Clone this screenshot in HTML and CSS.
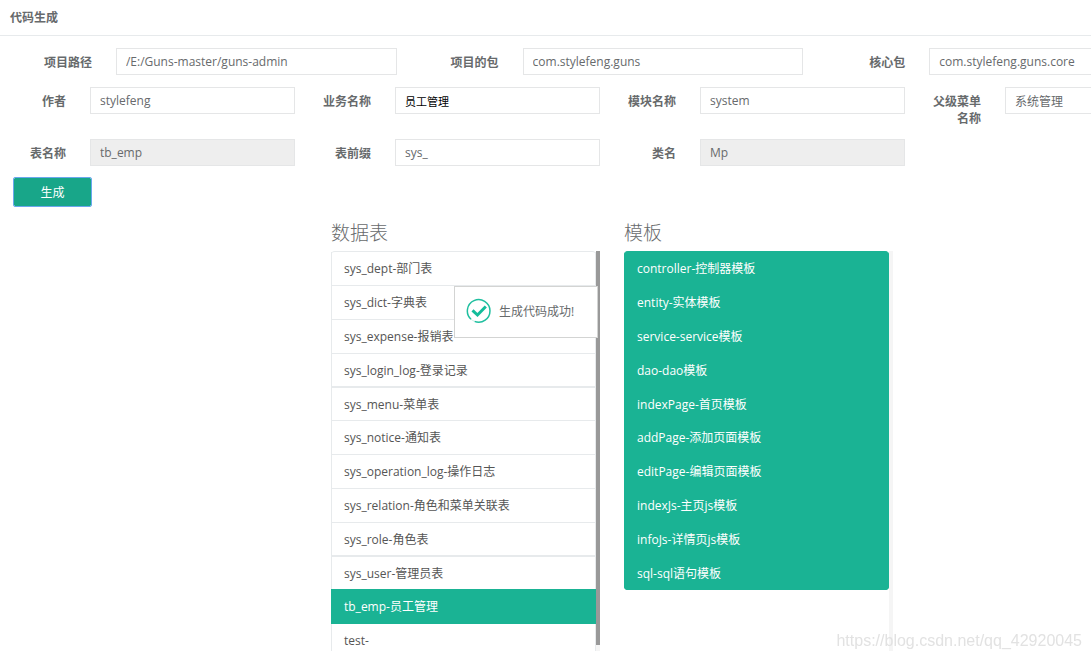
FILE: index.html
```html
<!DOCTYPE html>
<html lang="zh-CN">
<head>
<meta charset="utf-8">
<title>代码生成</title>
<link rel="stylesheet" href="styles.css">
</head>
<body>
<div class="page">
  <header class="page-title"><h1>代码生成</h1></header>
  <form class="code-form">
    <div class="row row-three">
      <div class="field"><label for="path">项目路径</label><input id="path" type="text" value="/E:/Guns-master/guns-admin"></div>
      <div class="field"><label for="pkg">项目的包</label><input id="pkg" type="text" value="com.stylefeng.guns"></div>
      <div class="field"><label for="core">核心包</label><input id="core" type="text" value="com.stylefeng.guns.core"></div>
    </div>
    <div class="row row-four">
      <div class="field"><label for="author">作者</label><input id="author" type="text" value="stylefeng"></div>
      <div class="field"><label for="biz">业务名称</label><input id="biz" class="autofilled" type="text" value="员工管理"></div>
      <div class="field"><label for="module">模块名称</label><input id="module" type="text" value="system"></div>
      <div class="field"><label for="parent">父级菜单名称</label><input id="parent" type="text" value="系统管理"></div>
    </div>
    <div class="row row-four">
      <div class="field"><label for="table">表名称</label><input id="table" type="text" value="tb_emp" disabled></div>
      <div class="field"><label for="prefix">表前缀</label><input id="prefix" type="text" value="sys_"></div>
      <div class="field"><label for="cls">类名</label><input id="cls" type="text" value="Mp" disabled></div>
    </div>
    <button class="generate" type="button">生成</button>
  </form>
  <main class="panels">
    <section class="panel tables">
      <h2>数据表</h2>
      <div class="scroll">
        <ul class="list">
          <li>sys_dept-部门表</li>
          <li>sys_dict-字典表</li>
          <li>sys_expense-报销表</li>
          <li>sys_login_log-登录记录</li>
          <li>sys_menu-菜单表</li>
          <li>sys_notice-通知表</li>
          <li>sys_operation_log-操作日志</li>
          <li>sys_relation-角色和菜单关联表</li>
          <li>sys_role-角色表</li>
          <li>sys_user-管理员表</li>
          <li class="active">tb_emp-员工管理</li>
          <li>test-</li>
        </ul>
        <div class="track"><div class="thumb"></div></div>
      </div>
      <div class="toast" role="status">
        <svg class="check" viewBox="0 0 26 26" aria-hidden="true">
          <path d="M5 21.2A11.3 11.3 0 1 1 8.500 23.400" fill="none" stroke="#1fbf9f" stroke-width="1.500"/>
          <path d="M8.500 23.400A11.300 11.300 0 0 1 5 21.200" fill="none" stroke="#c5eee5" stroke-width="1"/>
          <path d="M6.500 12.300L11.500 17L19.800 8.500" fill="none" stroke="#13bd9b" stroke-width="3"/>
        </svg>
        <span>生成代码成功!</span>
      </div>
    </section>
    <section class="panel templates">
      <h2>模板</h2>
      <div class="scroll">
        <ul class="list selected">
          <li>controller-控制器模板</li>
          <li>entity-实体模板</li>
          <li>service-service模板</li>
          <li>dao-dao模板</li>
          <li>indexPage-首页模板</li>
          <li>addPage-添加页面模板</li>
          <li>editPage-编辑页面模板</li>
          <li>indexJs-主页js模板</li>
          <li>infoJs-详情页js模板</li>
          <li>sql-sql语句模板</li>
        </ul>
        <div class="track"></div>
      </div>
    </section>
  </main>
</div>
<div class="watermark">https://blog.csdn.net/qq_42920045</div>
</body>
</html>
```
FILE: styles.css
```css
* { box-sizing: border-box; }
body {
  margin: 0;
  overflow: hidden;
  background: #fff;
  color: #676a6c;
  font: 12px/17px "Open Sans", "Noto Sans CJK SC", sans-serif;
}
.page { min-width: 1220px; }
.page-title {
  height: 36px;
  padding: 9px 10px;
  border-bottom: 1px solid #e7eaec;
}
.page-title h1 { margin: 0; font-size: 12px; line-height: 17px; font-weight: 600; }
.code-form { display: flex; flex-direction: column; gap: 12px; padding-top: 12px; }
.row { display: grid; }
.row-three { grid-template-columns: repeat(3, 1fr); }
.row-four { grid-template-columns: repeat(4, 1fr); }
.field {
  display: grid;
  grid-template-columns: 66fr 205fr;
  column-gap: 24px;
  align-items: start;
  padding-right: 10px;
}
.row-three .field { grid-template-columns: 92fr 281fr; }
.field label { padding: 6px 0 0 10px; text-align: right; font-weight: 700; }
.field input {
  width: 100%;
  min-width: 0;
  height: 27px;
  padding: 0 9px;
  border: 1px solid #e5e6e7;
  border-radius: 0;
  background: #fff;
  color: #676a6c;
  font: inherit;
}
.field input:disabled { background: #eee; }
.field .autofilled { color: #000; font-size: 11px; }
.generate {
  align-self: flex-start;
  width: 77px;
  height: 28px;
  margin-left: 14px;
  padding: 0;
  border: 1px solid #18a689;
  border-radius: 1px;
  outline: 1px solid #6aa7ee;
  background: #18a689;
  color: #fff;
  font: inherit;
}
.panels {
  display: grid;
  grid-template-columns: 307fr 269fr 269fr 303fr;
  column-gap: 24px;
  padding-top: 15px;
}
.panel { position: relative; }
.tables { grid-column: 2; }
.panel h2 { margin: 0; padding-bottom: 6px; font-size: 19px; line-height: 24px; font-weight: 300; }
.scroll { display: flex; height: 400px; overflow: hidden; }
.list {
  flex: 1;
  align-self: flex-start;
  margin: 0;
  padding: 0;
  border-top: 1px solid #e7eaec;
  border-radius: 4px 4px 0 0;
  list-style: none;
  color: #555;
}
.list li {
  height: 34px;
  padding: 8px 12px;
  border: solid #e7eaec;
  border-width: 0 1px 1px;
}
.list li:nth-child(5n + 4) { border-bottom-width: 2px; }
.list li:nth-child(5n) { height: 33px; }
.list .active {
  height: 35px;
  margin-top: -1px;
  padding-top: 9px;
  border-color: #1ab394;
  background: #1ab394;
  color: #fff;
}
.selected { overflow: hidden; border-radius: 4px; border-color: #1ab394; background: #1ab394; color: #fff; }
.selected li { border-color: #1ab394; }
.track { width: 4px; background: #f5f5f5; }
.thumb { height: 394px; background: #999; }
.toast {
  position: absolute;
  top: 65px;
  right: 2px;
  display: flex;
  align-items: center;
  gap: 7px;
  width: 144px;
  height: 52px;
  padding: 0 0 2px 11px;
  border: 1px solid #d3d4d3;
  background: #fff;
}
.check { width: 26px; height: 26px; }
.watermark {
  position: fixed;
  right: 9px;
  bottom: 8px;
  color: #e2e2e2;
  font: 16px/18px "Liberation Sans", sans-serif;
}
```
